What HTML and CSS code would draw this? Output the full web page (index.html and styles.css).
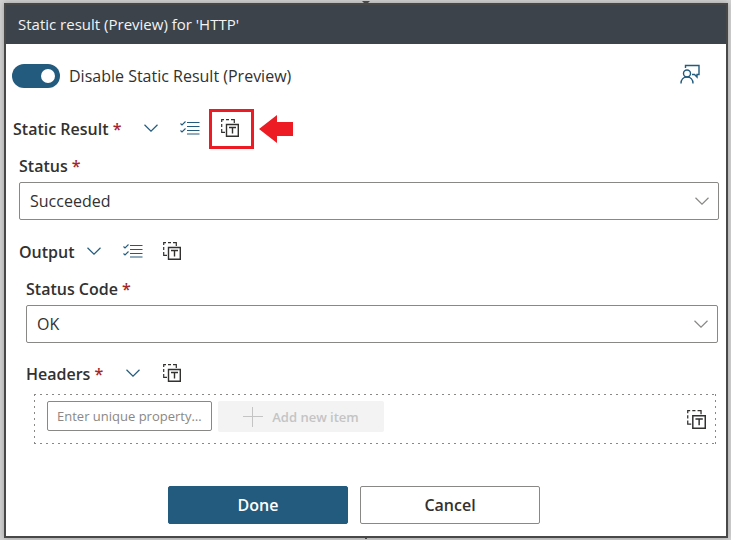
FILE: index.html
```html
<!DOCTYPE html>
<html lang="en">
<head>
<meta charset="utf-8">
<title>Static result (Preview) for 'HTTP'</title>
<link rel="stylesheet" href="styles.css">
</head>
<body>
<svg class="defs" aria-hidden="true">
  <symbol id="chevron" viewBox="0 0 14 8"><path d="M.5 .8 7 7.2 13.500 .8" fill="none" stroke="currentColor" stroke-width="1.200"/></symbol>
  <symbol id="list" viewBox="0 0 20 14"><path d="M7 1.500h12.500M7 5.500h12.500M7 9.500h12.500M7 13h12.500" fill="none" stroke="currentColor" stroke-width="1.200"/><path d="M.5 2.500 2 4 5.500.5M.5 9.500 2 11 5.500 7.500" fill="none" stroke="currentColor" stroke-width="1.100"/></symbol>
  <symbol id="template" viewBox="0 0 18 18"><path d="M.7 3V.7H3M5 .7H8M10 .7H13.300V4M.7 5V8M.7 10V13.300H4" fill="none" stroke="currentColor" stroke-width="1.200"/><path d="M5.500 5.500H17.300V17.300H5.500ZM8 8.500H15M11.500 8.500V14.500" fill="none" stroke="currentColor" stroke-width="1.400"/></symbol>
</svg>
<main class="card">
  <h1 class="title">Static result (Preview) for 'HTTP'</h1>
  <form class="content">
    <div class="toggle-row">
      <input class="toggle" type="checkbox" role="switch" id="disable" checked>
      <label for="disable">Disable Static Result (Preview)</label>
      <button class="feedback" type="button" aria-label="Feedback">
        <svg width="20" height="20" viewBox="0 0 20 20" fill="none" stroke="currentColor" stroke-width="1.400"><path d="M5.500 4V1.500H19V10.500H17V13L14.500 10.500H12"/><circle cx="7" cy="9.500" r="3.500"/><path d="M1 19.500C1 15.500 3.500 13 7 13S13 15.500 13 19.500"/></svg>
      </button>
    </div>

    <div class="section-row">
      <span class="label required">Static Result</span>
      <button class="icon-button" type="button" aria-label="Collapse Static Result"><svg width="14" height="8"><use href="#chevron"/></svg></button>
      <button class="icon-button" type="button" aria-label="Show list"><svg width="20" height="14"><use href="#list"/></svg></button>
      <button class="icon-button dark marked" type="button" aria-label="Switch to text mode"><svg width="18" height="18"><use href="#template"/></svg></button>
      <svg class="arrow" width="34" height="28" viewBox="0 0 34 28" aria-hidden="true"><path d="M0 14 18 0V7H34V21H18V28Z"/></svg>
    </div>

    <div class="group">
      <label class="label required field-label" for="status">Status</label>
      <div class="select-box">
        <select id="status"><option>Succeeded</option></select>
        <svg width="14" height="8" aria-hidden="true"><use href="#chevron"/></svg>
      </div>

      <div class="section-row spaced">
        <span class="label">Output</span>
        <button class="icon-button" type="button" aria-label="Collapse Output"><svg width="14" height="8"><use href="#chevron"/></svg></button>
        <button class="icon-button" type="button" aria-label="Show list"><svg width="20" height="14"><use href="#list"/></svg></button>
        <button class="icon-button dark" type="button" aria-label="Switch to text mode"><svg width="18" height="18"><use href="#template"/></svg></button>
      </div>

      <div class="group nested">
        <label class="label required field-label" for="code">Status Code</label>
        <div class="select-box">
          <select id="code"><option>OK</option></select>
          <svg width="14" height="8" aria-hidden="true"><use href="#chevron"/></svg>
        </div>

        <div class="section-row spaced">
          <span class="label required">Headers</span>
          <button class="icon-button" type="button" aria-label="Collapse Headers"><svg width="14" height="8"><use href="#chevron"/></svg></button>
          <button class="icon-button dark" type="button" aria-label="Switch to text mode"><svg width="18" height="18"><use href="#template"/></svg></button>
        </div>

        <div class="items">
          <input class="key" type="text" placeholder="Enter unique property name" aria-label="Property name">
          <button class="add" type="button" disabled><svg width="20" height="20" viewBox="0 0 20 20" aria-hidden="true"><path d="M9.500 0V20M0 9.500H20" stroke="currentColor"/></svg>Add new item</button>
          <button class="icon-button dark last" type="button" aria-label="Switch to text mode"><svg width="19" height="19"><use href="#template"/></svg></button>
        </div>
      </div>
    </div>

    <div class="actions">
      <button class="action primary" type="button">Done</button>
      <button class="action" type="button">Cancel</button>
    </div>
  </form>
</main>
</body>
</html>
```

FILE: styles.css
```css
* { box-sizing: border-box; }

body {
  margin: 0;
  padding: 3px 3px 2px 4px;
  background: #d2d2d2;
  color: #323130;
  font: 16px/20px "Open Sans", "Noto Sans", sans-serif;
}

button, input, select { font: inherit; color: inherit; }
.defs { position: absolute; width: 0; height: 0; }

.card {
  position: relative;
  border: 2px solid #484848;
  background: #fff;
  box-shadow: 0 0 6px rgba(0, 0, 0, .25);
}

.card::before, .card::after {
  content: "";
  position: absolute;
  left: 50%;
  transform: translateX(-50%);
  background: #484848;
}
.card::before {
  bottom: 100%;
  width: 8px;
  height: 4px;
  clip-path: polygon(0 0, 100% 0, 50% 100%);
}
.card::after { top: 100%; width: 2px; height: 3px; }

.title {
  margin: 0;
  padding: 9px 12px 10px;
  background: #3c434b;
  color: #f3f3f3;
  font-size: 15px;
  font-weight: 400;
}

.content { padding: 0 7px 12px; }

.toggle-row {
  display: flex;
  align-items: center;
  height: 65px;
  padding: 0 19px 2px 0;
}
.toggle-row label { margin-left: 9px; }

.toggle {
  appearance: none;
  display: flex;
  justify-content: flex-end;
  align-items: center;
  width: 48px;
  height: 24px;
  margin: 0 0 0 -1px;
  padding: 5px;
  border-radius: 12px;
  background: #225b7d;
}
.toggle::before {
  content: "";
  width: 14px;
  height: 14px;
  border-radius: 50%;
  background: #fff;
}

.feedback {
  display: flex;
  margin-left: auto;
  padding: 0 0 4px;
  border: 0;
  background: none;
  color: #225b7d;
}

.section-row { display: flex; align-items: center; height: 40px; }
.spaced { margin-top: 12px; }
.nested .spaced { margin-top: 11px; }
.label { font-weight: 600; }
.section-row .required { margin-right: 10px; }
.required::after { content: " *"; color: #a4262c; }

.icon-button {
  display: flex;
  flex: none;
  align-items: center;
  justify-content: center;
  width: 39px;
  height: 40px;
  padding: 0 0 2px;
  border: 0;
  background: none;
  color: #225b7d;
}
.dark { color: #323130; }
.marked { width: 45px; padding-right: 4px; border: 3px solid #ed1c24; }
.arrow { margin-left: 5px; fill: #ed1c24; }

.group { padding-left: 6px; }
.group.nested { padding: 0 1px 0 7px; }
.field-label { display: block; padding: 7px 0 6px; }

.select-box { position: relative; color: #8a8886; }
.select-box select {
  appearance: none;
  display: block;
  width: 100%;
  height: 38px;
  padding: 0 32px 0 10px;
  border: 1px solid #8a8886;
  border-radius: 2px;
  background: #fff;
  color: #323130;
}
.select-box svg { position: absolute; right: 10px; top: 15px; }

.items {
  --across: repeating-linear-gradient(90deg, #8a8886 0 2px, transparent 2px 6px);
  --down: repeating-linear-gradient(#8a8886 0 2px, transparent 2px 6px);
  display: flex;
  align-items: flex-start;
  gap: 6px;
  height: 50px;
  margin: 0 2px 0 8px;
  padding: 7px 0 0 13px;
  background:
    var(--across) top / 100% 1px no-repeat,
    var(--across) bottom / 100% 1px no-repeat,
    var(--down) left / 1px 100% no-repeat,
    var(--down) right / 1px 100% no-repeat;
}
.key {
  width: 165px;
  height: 30px;
  padding: 0 9px;
  border: 1px solid #8a8886;
  border-radius: 2px;
  font-size: 13px;
  text-overflow: ellipsis;
}
.key::placeholder { color: #8a8886; opacity: 1; }
.add {
  display: flex;
  align-items: center;
  justify-content: center;
  gap: 9px;
  width: 166px;
  height: 31px;
  padding: 0;
  border: 0;
  border-radius: 2px;
  background: #f3f3f3;
  color: #c4c4c4;
  font-size: 13px;
  font-weight: 600;
}
.last { height: 39px; margin-left: auto; }

.actions {
  display: flex;
  flex-wrap: wrap;
  justify-content: center;
  gap: 12px;
  margin-top: 42px;
  padding-right: 24px;
}
.action {
  width: 180px;
  height: 38px;
  border: 1px solid #8a8886;
  border-radius: 2px;
  background: #fff;
  font-weight: 600;
}
.primary { border-color: #225b7d; background: #225b7d; color: #fff; }
```
